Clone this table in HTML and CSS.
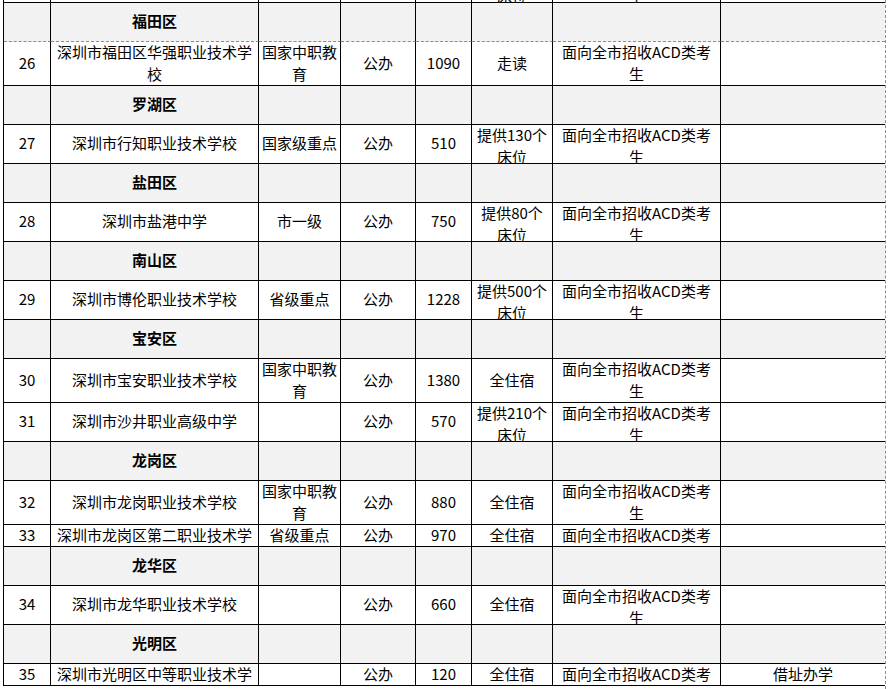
FILE: index.html
```html
<!DOCTYPE html>
<html lang="zh-CN">
<head>
<meta charset="utf-8">
<title>深圳市中职学校</title>
<link rel="stylesheet" href="styles.css">
</head>
<body>
<div class="sheet">
  <div class="grid">
    <div class="row">
      <div class="c"></div><div class="c"></div><div class="c"></div><div class="c"></div><div class="c"></div>
      <div class="c t"><span class="w">提供200个<br>床位</span></div><div class="c t"><span class="w">面向全市招收ACD类考<br>生</span></div><div class="c last"></div>
    </div>
    <div class="row gray dash">
      <div class="c"></div><div class="c b">福田区</div><div class="c"></div><div class="c"></div><div class="c"></div><div class="c"></div><div class="c"></div><div class="c last"></div>
    </div>
    <div class="row">
      <div class="c">26</div><div class="c t"><span class="w">深圳市福田区华强职业技术学<br>校</span></div><div class="c t"><span class="w">国家中职教<br>育</span></div><div class="c">公办</div><div class="c">1090</div><div class="c">走读</div><div class="c t"><span class="w">面向全市招收ACD类考<br>生</span></div><div class="c last"></div>
    </div>
    <div class="row gray">
      <div class="c"></div><div class="c b">罗湖区</div><div class="c"></div><div class="c"></div><div class="c"></div><div class="c"></div><div class="c"></div><div class="c last"></div>
    </div>
    <div class="row">
      <div class="c">27</div><div class="c">深圳市行知职业技术学校</div><div class="c">国家级重点</div><div class="c">公办</div><div class="c">510</div><div class="c t"><span class="w">提供130个<br>床位</span></div><div class="c t"><span class="w">面向全市招收ACD类考<br>生</span></div><div class="c last"></div>
    </div>
    <div class="row gray">
      <div class="c"></div><div class="c b">盐田区</div><div class="c"></div><div class="c"></div><div class="c"></div><div class="c"></div><div class="c"></div><div class="c last"></div>
    </div>
    <div class="row">
      <div class="c">28</div><div class="c">深圳市盐港中学</div><div class="c">市一级</div><div class="c">公办</div><div class="c">750</div><div class="c t"><span class="w">提供80个<br>床位</span></div><div class="c t"><span class="w">面向全市招收ACD类考<br>生</span></div><div class="c last"></div>
    </div>
    <div class="row gray">
      <div class="c"></div><div class="c b">南山区</div><div class="c"></div><div class="c"></div><div class="c"></div><div class="c"></div><div class="c"></div><div class="c last"></div>
    </div>
    <div class="row">
      <div class="c">29</div><div class="c">深圳市博伦职业技术学校</div><div class="c">省级重点</div><div class="c">公办</div><div class="c">1228</div><div class="c t"><span class="w">提供500个<br>床位</span></div><div class="c t"><span class="w">面向全市招收ACD类考<br>生</span></div><div class="c last"></div>
    </div>
    <div class="row gray">
      <div class="c"></div><div class="c b">宝安区</div><div class="c"></div><div class="c"></div><div class="c"></div><div class="c"></div><div class="c"></div><div class="c last"></div>
    </div>
    <div class="row">
      <div class="c">30</div><div class="c">深圳市宝安职业技术学校</div><div class="c t"><span class="w">国家中职教<br>育</span></div><div class="c">公办</div><div class="c">1380</div><div class="c">全住宿</div><div class="c t"><span class="w">面向全市招收ACD类考<br>生</span></div><div class="c last"></div>
    </div>
    <div class="row">
      <div class="c">31</div><div class="c">深圳市沙井职业高级中学</div><div class="c"></div><div class="c">公办</div><div class="c">570</div><div class="c t"><span class="w">提供210个<br>床位</span></div><div class="c t"><span class="w">面向全市招收ACD类考<br>生</span></div><div class="c last"></div>
    </div>
    <div class="row gray">
      <div class="c"></div><div class="c b">龙岗区</div><div class="c"></div><div class="c"></div><div class="c"></div><div class="c"></div><div class="c"></div><div class="c last"></div>
    </div>
    <div class="row">
      <div class="c">32</div><div class="c">深圳市龙岗职业技术学校</div><div class="c t"><span class="w">国家中职教<br>育</span></div><div class="c">公办</div><div class="c">880</div><div class="c">全住宿</div><div class="c t"><span class="w">面向全市招收ACD类考<br>生</span></div><div class="c last"></div>
    </div>
    <div class="row">
      <div class="c">33</div><div class="c t"><span class="w">深圳市龙岗区第二职业技术学<br>校</span></div><div class="c">省级重点</div><div class="c">公办</div><div class="c">970</div><div class="c">全住宿</div><div class="c t"><span class="w">面向全市招收ACD类考<br>生</span></div><div class="c last"></div>
    </div>
    <div class="row gray">
      <div class="c"></div><div class="c b">龙华区</div><div class="c"></div><div class="c"></div><div class="c"></div><div class="c"></div><div class="c"></div><div class="c last"></div>
    </div>
    <div class="row">
      <div class="c">34</div><div class="c">深圳市龙华职业技术学校</div><div class="c"></div><div class="c">公办</div><div class="c">660</div><div class="c">全住宿</div><div class="c t"><span class="w">面向全市招收ACD类考<br>生</span></div><div class="c last"></div>
    </div>
    <div class="row gray">
      <div class="c"></div><div class="c b">光明区</div><div class="c"></div><div class="c"></div><div class="c"></div><div class="c"></div><div class="c"></div><div class="c last"></div>
    </div>
    <div class="row">
      <div class="c">35</div><div class="c t"><span class="w">深圳市光明区中等职业技术学<br>校</span></div><div class="c"></div><div class="c">公办</div><div class="c">120</div><div class="c">全住宿</div><div class="c t"><span class="w">面向全市招收ACD类考<br>生</span></div><div class="c last">借址办学</div>
    </div>
  </div>
</div>
</body>
</html>
```

FILE: styles.css
```css
html, body {
  margin: 0;
  padding: 0;
  background: #ffffff;
  overflow: hidden;
}

.sheet {
  width: 885px;
  height: 689px;
  overflow: hidden;
  border-right: 1px dashed #8c8c8c;
  font-family: "Noto Sans CJK SC", "Noto Sans", sans-serif;
  font-size: 15px;
  color: #000000;
}

.grid {
  display: grid;
  grid-template-columns: 47px 208px 82px 75px 56px 81px 168px 164px;
  grid-template-rows: 39px 39px 44px 39px 39px 39px 39px 39px 39px 39px 44px 39px 39px 44px 22px 39px 39px 39px 22px;
  margin-top: -36px;
  margin-left: 3px;
  border-left: 1px solid #000;
  width: 881px;
}

.row {
  display: contents;
}

.c {
  box-sizing: border-box;
  border-right: 1px solid #000;
  border-bottom: 1px solid #000;
  display: flex;
  align-items: center;
  justify-content: center;
  text-align: center;
  overflow: hidden;
  line-height: 22px;
  padding: 0 2px 2px;
  white-space: nowrap;
  background: #ffffff;
}

.c.t {
  align-items: flex-start;
  padding-bottom: 0;
}

.w {
  display: block;
  margin-top: -1px;
}

.c.last {
  border-right: none;
}

.c.b {
  font-weight: bold;
}

.gray > .c {
  background: #f2f2f2;
}

.dash > .c {
  border-bottom: 1px dashed #8c8c8c;
}
```
